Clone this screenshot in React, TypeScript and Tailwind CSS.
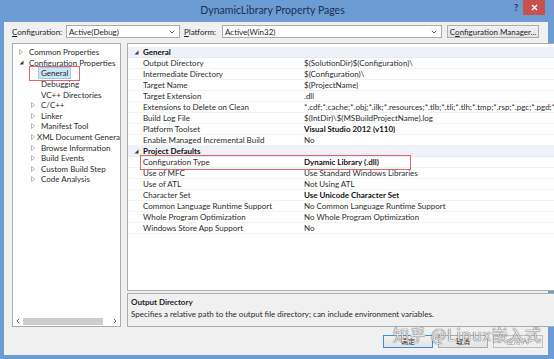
import React from "react";

type Row = { name: string; value: string; bold?: boolean; marked?: boolean };

const general: Row[] = [
  { name: "Output Directory", value: "$(SolutionDir)$(Configuration)\\" },
  { name: "Intermediate Directory", value: "$(Configuration)\\" },
  { name: "Target Name", value: "$(ProjectName)" },
  { name: "Target Extension", value: ".dll" },
  {
    name: "Extensions to Delete on Clean",
    value: "*.cdf;*.cache;*.obj;*.ilk;*.resources;*.tlb;*.tli;*.tlh;*.tmp;*.rsp;*.pgc;*.pgd;*.meta;*.tlog;*.manifest",
  },
  { name: "Build Log File", value: "$(IntDir)\\$(MSBuildProjectName).log" },
  { name: "Platform Toolset", value: "Visual Studio 2012 (v110)", bold: true },
  { name: "Enable Managed Incremental Build", value: "No" },
];

const defaults: Row[] = [
  { name: "Configuration Type", value: "Dynamic Library (.dll)", bold: true, marked: true },
  { name: "Use of MFC", value: "Use Standard Windows Libraries" },
  { name: "Use of ATL", value: "Not Using ATL" },
  { name: "Character Set", value: "Use Unicode Character Set", bold: true },
  { name: "Common Language Runtime Support", value: "No Common Language Runtime Support" },
  { name: "Whole Program Optimization", value: "No Whole Program Optimization" },
  { name: "Windows Store App Support", value: "No" },
];

type TreeItem = { label: string; level: number; kind: "open" | "closed" | "leaf"; selected?: boolean };

const tree: TreeItem[] = [
  { label: "Common Properties", level: 0, kind: "closed" },
  { label: "Configuration Properties", level: 0, kind: "open" },
  { label: "General", level: 1, kind: "leaf", selected: true },
  { label: "Debugging", level: 1, kind: "leaf" },
  { label: "VC++ Directories", level: 1, kind: "leaf" },
  { label: "C/C++", level: 1, kind: "closed" },
  { label: "Linker", level: 1, kind: "closed" },
  { label: "Manifest Tool", level: 1, kind: "closed" },
  { label: "XML Document Generator", level: 1, kind: "closed" },
  { label: "Browse Information", level: 1, kind: "closed" },
  { label: "Build Events", level: 1, kind: "closed" },
  { label: "Custom Build Step", level: 1, kind: "closed" },
  { label: "Code Analysis", level: 1, kind: "closed" },
];

const Closed = () => (
  <svg width="4" height="6" viewBox="0 0 4 6" className="shrink-0">
    <path d="M0.5 0.5 L3.5 3 L0.5 5.5 Z" fill="none" stroke="#a6a6a6" strokeWidth="0.8" />
  </svg>
);

const Open = () => (
  <svg width="5" height="5" viewBox="0 0 5 5" className="shrink-0">
    <path d="M4.5 0.5 L4.5 4.5 L0.5 4.5 Z" fill="#3c3c3c" />
  </svg>
);

const Chevron = () => (
  <svg width="6" height="4" viewBox="0 0 6 4">
    <path d="M0.8 0.8 L3 3 L5.2 0.8" fill="none" stroke="#555" strokeWidth="1" />
  </svg>
);

const Dropdown = ({ value, w }: { value: string; w: string }) => (
  <div className={`${w} h-[13px] bg-white border border-[#acacac] flex items-center justify-between pl-[2px] pr-[4px]`}>
    <span>{value}</span>
    <Chevron />
  </div>
);

const GridRow = ({ row }: { row: Row }) => (
  <div className="relative flex h-[11px] items-center border-b border-[#f3f3f3]">
    <div className="w-[15px] shrink-0" />
    <div className="w-[157px] shrink-0 text-[#2b2b2b] whitespace-nowrap">{row.name}</div>
    <div className={`pl-[4px] whitespace-nowrap overflow-hidden ${row.bold ? "font-bold text-[#111]" : "text-[#2b2b2b]"}`}>
      {row.value}
    </div>
    {row.marked && (
      <div className="absolute left-[12px] top-[-2px] w-[271px] h-[15px] border border-[#e0666b] pointer-events-none" />
    )}
  </div>
);

const Category = ({ label }: { label: string }) => (
  <div className="flex h-[11px] items-center bg-[#eef2f8] border-b border-[#e6ebf2]">
    <div className="w-[15px] shrink-0 flex justify-center pl-[2px]">
      <Open />
    </div>
    <div className="font-bold text-[#111]">{label}</div>
  </div>
);

export default function App() {
  return (
    <div className="w-[554px] h-[359px] bg-[#6d9bd4] flex flex-col overflow-hidden relative font-[Lato,'Liberation_Sans',sans-serif] text-[8px] leading-none text-[#1e1e1e]">
      {/* title bar */}
      <div className="h-[22px] flex items-start shrink-0">
        <div className="flex-1" />
        <div className="pt-[5px] text-[10.5px] text-[#1b3152]">DynamicLibrary Property Pages</div>
        <div className="flex-1 flex justify-end items-start pr-[9px]">
          <span className="mt-[3px] mr-[5px] text-[9px] font-bold text-[#1b3152]">?</span>
          <div className="w-[22px] h-[15px] bg-[#c7514d] flex items-center justify-center">
            <svg width="7" height="7" viewBox="0 0 7 7">
              <path d="M1 1 L6 6 M6 1 L1 6" stroke="#fff" strokeWidth="1.4" />
            </svg>
          </div>
        </div>
      </div>

      {/* body */}
      <div className="flex-1 ml-[4px] mr-[6px] mb-[4px] bg-[#f0f0f0] flex flex-col pl-[8px] pr-[5px]">
        <div className="mt-[3px] flex items-center h-[13px]">
          <span className="w-[54px]">
            <span className="underline">C</span>onfiguration:
          </span>
          <Dropdown value="Active(Debug)" w="w-[114px]" />
          <span className="ml-[4px] w-[38px]">
            <span className="underline">P</span>latform:
          </span>
          <Dropdown value="Active(Win32)" w="w-[220px]" />
          <div className="ml-[5px] w-[92px] h-[13px] border border-[#acacac] bg-gradient-to-b from-[#f2f2f2] to-[#e3e3e3] flex items-center justify-center whitespace-nowrap">
            C<span className="underline">o</span>nfiguration Manager...
          </div>
        </div>

        <div className="mt-[5px] h-[284px] flex gap-[6px]">
          {/* tree */}
          <div className="w-[109px] bg-white border border-[#acacac] flex flex-col">
            <div className="flex-1 pt-[3px] overflow-hidden">
              {tree.map((t) => (
                <div
                  key={t.label}
                  className={`relative flex items-center h-[10.6px] whitespace-nowrap ${t.level === 0 ? "pl-[6px]" : "pl-[18px]"}`}
                >
                  <div className="w-[8px] flex items-center">
                    {t.kind === "closed" && <Closed />}
                    {t.kind === "open" && <Open />}
                  </div>
                  <span
                    className={
                      t.selected
                        ? "ml-[-1px] px-[2px] py-[1px] bg-[#cde6f7] border border-[#9fcdf0]"
                        : "ml-[2px] text-[#2b2b2b]"
                    }
                  >
                    {t.label}
                  </span>
                  {t.selected && (
                    <div className="absolute left-[16px] top-[-2px] w-[51px] h-[15px] border border-[#e0666b]" />
                  )}
                </div>
              ))}
            </div>
            <div className="h-[10px] flex items-center px-[3px] gap-[3px]">
              <svg width="4" height="6" viewBox="0 0 4 6">
                <path d="M3.2 0.8 L1 3 L3.2 5.2" fill="none" stroke="#606060" strokeWidth="1" />
              </svg>
              <div className="h-[7px] w-[80px] bg-[#cdcdcd]" />
              <div className="flex-1" />
              <svg width="4" height="6" viewBox="0 0 4 6">
                <path d="M0.8 0.8 L3 3 L0.8 5.2" fill="none" stroke="#606060" strokeWidth="1" />
              </svg>
            </div>
          </div>

          {/* property grid */}
          <div className="flex-1 flex flex-col gap-[2px]">
            <div className="h-[248px] bg-white border border-[#acacac] overflow-hidden">
              <div className="pt-[3px]">
                <Category label="General" />
              </div>
              {general.map((r) => (
                <GridRow key={r.name} row={r} />
              ))}
              <Category label="Project Defaults" />
              {defaults.map((r) => (
                <GridRow key={r.name} row={r} />
              ))}
            </div>
            <div className="flex-1 border border-[#acacac] bg-[#f0f0f0] px-[3px] pt-[4px] flex flex-col gap-[4px]">
              <div className="font-bold">Output Directory</div>
              <div className="text-[#2b2b2b]">
                Specifies a relative path to the output file directory; can include environment variables.
              </div>
            </div>
          </div>
        </div>

        <div className="mt-[8px] flex justify-end gap-[5px] h-[13px] font-['Noto_Sans_CJK_SC',sans-serif] text-[7px]">
          <div className="w-[50px] border border-[#3c8fdc] bg-gradient-to-b from-[#f2f2f2] to-[#e3e3e3] flex items-center justify-center">
            确定
          </div>
          <div className="w-[50px] border border-[#acacac] bg-gradient-to-b from-[#f2f2f2] to-[#e3e3e3] flex items-center justify-center">
            取消
          </div>
          <div className="w-[50px] border border-[#bfbfbf] bg-[#efefef] text-[#9a9a9a] flex items-center justify-center">
            应用(A)
          </div>
        </div>
      </div>

      {/* watermark */}
      <div className="absolute left-[393px] top-[326px] font-['Noto_Sans_CJK_SC',sans-serif] text-[16px] text-white/85 [text-shadow:0_0_1px_#555,0_0_1px_#555] tracking-[0.8px]">
        知乎 @Linux嵌入式
      </div>
    </div>
  );
}
